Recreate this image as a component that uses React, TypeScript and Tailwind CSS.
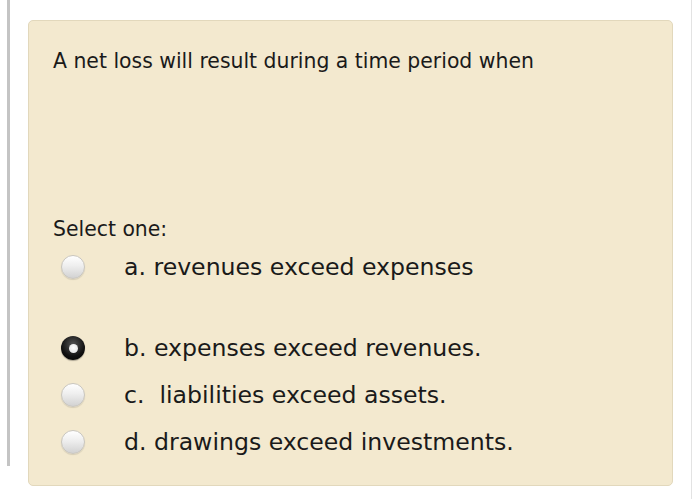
import React from "react";

function Radio({ checked }: { checked?: boolean }) {
  if (checked) {
    return (
      <div className="w-[24px] h-[24px] rounded-full bg-[radial-gradient(circle_at_50%_35%,#555_0%,#111_60%,#000_100%)] flex items-center justify-center shadow-[0_1px_1px_rgba(0,0,0,0.3)]">
        <div className="w-[9px] h-[9px] rounded-full bg-[radial-gradient(circle_at_50%_40%,#fff_0%,#ddd_100%)]" />
      </div>
    );
  }
  return (
    <div className="w-[24px] h-[24px] rounded-full border border-[#c9c6bf] bg-[linear-gradient(180deg,#ffffff_0%,#eeeeee_45%,#d2d2d2_100%)] shadow-[0_1px_1px_rgba(0,0,0,0.12)]" />
  );
}

const options = [
  { label: "a. revenues exceed expenses", checked: false, extra: true },
  { label: "b. expenses exceed revenues.", checked: true },
  { label: "c.\u00a0 liabilities exceed assets.", checked: false },
  { label: "d. drawings exceed investments.", checked: false },
];

export default function App() {
  return (
    <div
      className="w-[695px] h-[499px] bg-white flex text-[#1a1a1a] overflow-hidden"
      style={{ fontFamily: '"DejaVu Sans", Verdana, sans-serif' }}
    >
      <div className="w-[7px]" />
      <div className="w-[3px] h-[466px] bg-[#c4c4c4]" />
      <div className="w-[18px]" />
      <div className="w-[645px] mt-[20px] h-[466px] rounded-[5px] border border-[#e2d8bc] bg-[#f3e9cf] pl-[24px] pt-[26px] flex flex-col">
        <div className="text-[20.4px] leading-[28px]">A net loss will result during a time period when</div>
        <div className="mt-[141px] text-[20.4px] leading-[26px]">Select one:</div>
        <div className="flex flex-col mt-[5px]">
          {options.map((o, i) => (
            <div
              key={i}
              className={`flex items-center h-[40px] ${o.extra ? "mb-[41px]" : "mb-[7px]"}`}
            >
              <div className="w-[71px] pl-[8px] flex items-center">
                <Radio checked={o.checked} />
              </div>
              <div className="text-[23.6px] leading-[32px] whitespace-pre">{o.label}</div>
            </div>
          ))}
        </div>
      </div>
      <div className="w-[18px]" />
      <div className="w-[1px] h-full bg-[#e3e3e3]" />
    </div>
  );
}
